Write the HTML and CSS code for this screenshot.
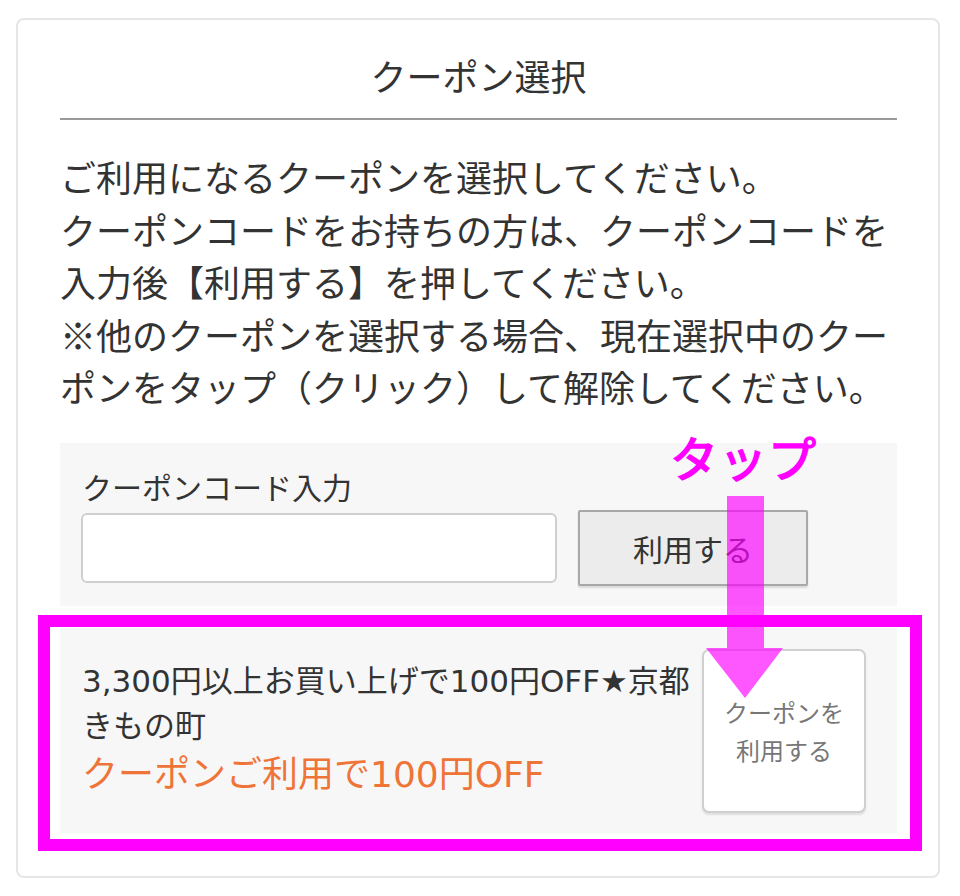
FILE: index.html
```html
<!DOCTYPE html>
<html lang="ja">
<head>
<meta charset="utf-8">
<title>クーポン選択</title>
<link rel="stylesheet" href="styles.css">
</head>
<body>
<div class="page">
  <section class="card">
    <h1 class="title">クーポン選択</h1>
    <p class="intro">ご利用になるクーポンを選択してください。<br>クーポンコードをお持ちの方は、クーポンコードを入力後【利用する】を押してください。<br>※他のクーポンを選択する場合、現在選択中のクーポンをタップ（クリック）して解除してください。</p>
    <div class="code-box">
      <div class="code-label">クーポンコード入力</div>
      <div class="code-row">
        <input class="code-input" type="text">
        <button class="code-btn" type="button">利用する</button>
      </div>
    </div>
    <div class="coupon">
      <div class="coupon-text">
        <div class="coupon-name">3,300円以上お買い上げで100円OFF★京都きもの町</div>
        <div class="coupon-off">クーポンご利用で100円OFF</div>
      </div>
      <button class="coupon-btn" type="button">クーポンを<br>利用する</button>
    </div>
  </section>

  <div class="hl-frame"></div>
  <div class="tap-label">タップ</div>
  <svg class="tap-arrow" width="90" height="215" viewBox="0 0 90 215">
    <path d="M27 6 H64 V158 H83 L45 208 L6 158 H27 Z" fill="#ff00ff" fill-opacity="0.66"/>
  </svg>
</div>
</body>
</html>
```

FILE: styles.css
```css
* { box-sizing: border-box; }
html, body { margin: 0; padding: 0; background: #ffffff; }
body {
  font-family: "Noto Sans CJK JP", "Noto Sans", sans-serif;
  color: #333333;
}
.page {
  position: relative;
  width: 960px;
  height: 896px;
  padding: 18px 0 0 16px;
}
.card {
  width: 924px;
  height: 860px;
  border: 2px solid #e6e6e6;
  border-radius: 8px;
  padding: 0 41px 0 42px;
}
.title {
  margin: 0;
  padding: 34px 0 22px;
  font-size: 36px;
  line-height: 42px;
  font-weight: 400;
  text-align: center;
  border-bottom: 2px solid #9a9a9a;
  color: #333;
}
.intro {
  margin: 30px 0 0;
  font-size: 36px;
  line-height: 52.5px;
}
.code-box {
  margin-top: 30px;
  background: #f7f7f7;
  padding: 20px 22px 20px 21px;
}
.code-label {
  font-size: 30px;
  line-height: 46px;
  padding-left: 1px;
  margin-bottom: 1px;
}
.code-row {
  display: flex;
  align-items: center;
  gap: 21px;
}
.code-input {
  width: 476px;
  height: 70px;
  border: 2px solid #cfcfcf;
  border-radius: 6px;
  background: #fff;
  margin: 0;
}
.code-btn {
  width: 230px;
  height: 76px;
  margin: 0;
  border: 2px solid #a8a8a8;
  border-radius: 2px;
  background: #ececec;
  box-shadow: 0 2px 2px rgba(0,0,0,0.12);
  font-family: "Noto Sans CJK JP", sans-serif;
  font-size: 30px;
  color: #333;
}
.coupon {
  margin-top: 22px;
  background: #f7f7f7;
  display: flex;
  align-items: flex-start;
  padding: 21px 31px 20px 22px;
  gap: 8px;
}
.coupon-text {
  flex: 1;
  padding-top: 10px;
  font-family: "DejaVu Sans", "Noto Sans CJK JP", sans-serif;
}
.coupon-name {
  font-size: 31px;
  line-height: 45px;
}
.coupon-off {
  font-size: 36px;
  line-height: 52px;
  color: #ef7438;
}
.coupon-btn {
  flex: none;
  width: 164px;
  height: 164px;
  margin: 0;
  background: #ffffff;
  border: 2px solid #d0d0d0;
  border-radius: 7px;
  box-shadow: 0 2px 2px rgba(0,0,0,0.10);
  font-family: "Noto Sans CJK JP", sans-serif;
  font-size: 24px;
  line-height: 38px;
  color: #777777;
  padding: 0;
}
.hl-frame {
  position: absolute;
  left: 38px;
  top: 615px;
  width: 884px;
  height: 236px;
  border: 12px solid #ff00ff;
}
.tap-label {
  position: absolute;
  left: 670px;
  top: 424px;
  font-size: 48px;
  line-height: 64px;
  font-weight: 400;
  -webkit-text-stroke: 1.6px #ff00ff;
  color: #ff00ff;
  letter-spacing: 1px;
}
.tap-arrow {
  position: absolute;
  left: 700px;
  top: 490px;
}
```
